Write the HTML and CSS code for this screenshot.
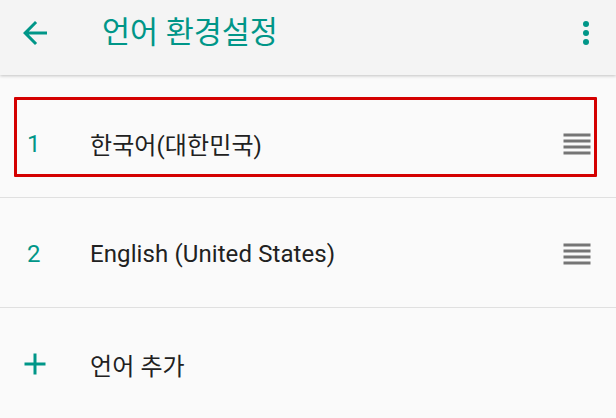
FILE: index.html
```html
<!DOCTYPE html>
<html lang="ko">
<head>
<meta charset="utf-8">
<title>언어 환경설정</title>
<link rel="stylesheet" href="styles.css">
</head>
<body>
<header class="toolbar">
  <svg class="tb-icon back" width="36" height="36" viewBox="0 0 24 24"><path fill="#009688" d="M20 11H7.83l5.59-5.59L12 4l-8 8 8 8 1.41-1.41L7.83 13H20v-2z"/></svg>
  <h1 class="title">언어 환경설정</h1>
  <svg class="tb-icon more" width="36" height="36" viewBox="0 0 24 24"><circle cx="12" cy="6" r="2" fill="#009688"/><circle cx="12" cy="12" r="2" fill="#009688"/><circle cx="12" cy="18" r="2" fill="#009688"/></svg>
</header>
<main class="list">
  <div class="row">
    <div class="lead num">1</div>
    <div class="label">한국어(대한민국)</div>
    <svg class="handle" width="36" height="36" viewBox="0 0 24 24"><path fill="#757575" d="M3 15h18v-2H3v2zm0 4h18v-2H3v2zm0-8h18V9H3v2zm0-6v2h18V5H3z"/></svg>
  </div>
  <div class="row">
    <div class="lead num">2</div>
    <div class="label">English (United States)</div>
    <svg class="handle" width="36" height="36" viewBox="0 0 24 24"><path fill="#757575" d="M3 15h18v-2H3v2zm0 4h18v-2H3v2zm0-8h18V9H3v2zm0-6v2h18V5H3z"/></svg>
  </div>
  <div class="row last">
    <div class="lead icon"><svg width="36" height="36" viewBox="0 0 24 24"><path fill="#009688" d="M19 13h-6v6h-2v-6H5v-2h6V5h2v6h6v2z"/></svg></div>
    <div class="label">언어 추가</div>
  </div>
</main>
<div class="highlight"></div>
</body>
</html>
```
FILE: styles.css
```css
* { box-sizing: border-box; }
html, body { margin: 0; padding: 0; }
body {
  width: 616px;
  height: 418px;
  overflow: hidden;
  background: #fafafa;
  font-family: Roboto, "Noto Sans CJK KR", sans-serif;
  color: #212121;
  position: relative;
}
.toolbar {
  height: 75px;
  background: #f4f4f4;
  display: flex;
  align-items: flex-start;
  padding-top: 15px;
  box-shadow: 0 1px 3px rgba(0,0,0,0.22);
  position: relative;
  z-index: 1;
}
.tb-icon { display: block; flex: none; }
.back { margin-left: 17px; }
.title {
  margin: 0 0 0 49px;
  font-family: Roboto, "Noto Sans CJK KR", sans-serif;
  font-weight: 400;
  font-size: 30.5px;
  line-height: 36px;
  color: #009688;
  flex: 1;
}
.more { margin-right: 12px; }
.list { padding-top: 13px; }
.row {
  height: 110px;
  display: flex;
  align-items: center;
  border-bottom: 1px solid #e0e0e0;
  padding-top: 2px;
}
.row.last { border-bottom: none; }
.lead { width: 90px; flex: none; }
.num {
  padding-left: 27px;
  color: #009688;
  font-size: 24px;
}
.icon { padding-left: 17px; display: flex; }
.icon svg { display: block; }
.label {
  flex: 1;
  font-size: 24px;
  letter-spacing: 0.1px;
}
.handle { display: block; flex: none; margin-right: 21px; }
.highlight {
  position: absolute;
  left: 14px;
  top: 97px;
  width: 583px;
  height: 80px;
  border: 3px solid #d40000;
  border-radius: 1px;
}
```
